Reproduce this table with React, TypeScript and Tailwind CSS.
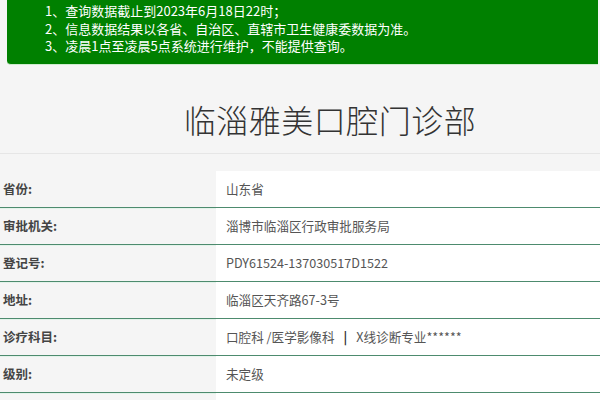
const ROWS: [string, React.ReactNode][] = [
  ["省份:", "山东省"],
  ["审批机关:", "淄博市临淄区行政审批服务局"],
  ["登记号:", "PDY61524-137030517D1522"],
  ["地址:", "临淄区天齐路67-3号"],
  [
    "诊疗科目:",
    <>
      口腔科 /医学影像科
      <span className="mx-[9px] font-bold text-[#333]">|</span>
      X线诊断专业******
    </>,
  ],
  ["级别:", "未定级"],
  ["", ""],
];

export default function App() {
  return (
    <div
      className="w-[600px] h-[400px] overflow-hidden bg-[#f5f5f5]"
      style={{ fontFamily: '"Noto Sans CJK SC", "Noto Sans", sans-serif' }}
    >
      <div className="ml-[7px] mr-[2px] h-[65px] bg-[#008000] rounded-bl-[4px] border-b border-[#cfeccf] pl-[38px] pt-[2px] text-white text-[13px] leading-[17.5px]">
        <p>1、查询数据截止到2023年6月18日22时；</p>
        <p>2、信息数据结果以各省、自治区、直辖市卫生健康委数据为准。</p>
        <p>3、凌晨1点至凌晨5点系统进行维护，不能提供查询。</p>
      </div>

      <div className="h-[89px] border-b border-[#e6e6e6] flex items-center justify-center pt-[19px] pl-[60px]">
        <h1 className="text-[32px] leading-none font-light text-[#333] tracking-[0.5px]">临淄雅美口腔门诊部</h1>
      </div>

      <div className="mt-[17px]">
        {ROWS.map(([label, value], i) => (
          <div key={i} className="flex h-[37px] border-b border-[#4d8b6e] shadow-[0_1px_0_#e3f3ea]">
            <div className="w-[216px] pl-[3px] flex items-center text-[12.5px] font-bold text-[#444]">{label}</div>
            <div className="flex-1 bg-white pl-[10px] flex items-center text-[12.6px] text-[#555] whitespace-pre">{value}</div>
          </div>
        ))}
      </div>
    </div>
  );
}
